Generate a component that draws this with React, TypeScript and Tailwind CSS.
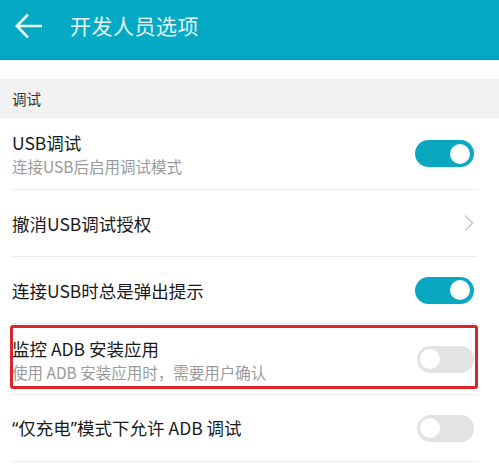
import React from "react";

type RowProps = {
  title: React.ReactNode;
  subtitle?: string;
  control: React.ReactNode;
  height: string;
  highlight?: boolean;
};

function Toggle({ on }: { on: boolean }) {
  return (
    <div
      className={
        on
          ? "flex h-[27px] w-[59px] items-center justify-end rounded-full bg-[#0aa7c1] px-[4px]"
          : "flex h-[27px] w-[57px] items-center justify-start rounded-full bg-[#e3e3e3] px-[3px]"
      }
    >
      <div className="h-[20px] w-[20px] rounded-full bg-white" />
    </div>
  );
}

function Chevron() {
  return (
    <svg width="12" height="18" viewBox="0 0 12 18">
      <path d="M3 1.5 L10.5 9 L3 16.5" fill="none" stroke="#c4c4c4" strokeWidth="1.4" />
    </svg>
  );
}

function Row({ title, subtitle, control, height, highlight }: RowProps) {
  return (
    <div className={`relative ml-[12px] mr-[21px] flex items-center border-b border-[#ececec] ${height}`}>
      <div className="flex flex-1 flex-col">
        <span className="text-[17.5px] leading-[25px] text-[#1a1a1a]">{title}</span>
        {subtitle && (
          <span className="text-[15.5px] leading-[22px] text-[#9a9a9a]">{subtitle}</span>
        )}
      </div>
      <div className="mr-[4px]">{control}</div>
      {highlight && (
        <div className="pointer-events-none absolute left-[-2px] right-[0px] top-[1px] bottom-[5px] rounded-[3px] border-[3px] border-[#d9262b]" />
      )}
    </div>
  );
}

const q = "font-['Noto_Sans']";

export default function App() {
  return (
    <div
      className="h-[472px] w-[499px] overflow-hidden bg-white"
      style={{ fontFamily: '"Noto Sans CJK SC", "Noto Sans", sans-serif' }}
    >
      <div className="flex h-[60px] items-center border-b border-[#1a9aab] bg-[#04a9c4] pb-[8px]">
        <svg width="28" height="26" viewBox="0 0 28 26" className="ml-[15px]">
          <path
            d="M13 1.5 L1.8 13 L13 24.5 M1.8 13 H27"
            fill="none"
            stroke="#e8f7fa"
            strokeWidth="2.6"
          />
        </svg>
        <span className="ml-[27px] text-[21px] tracking-[0.5px] text-[#e6f6f9]">开发人员选项</span>
      </div>
      <div className="h-[19px] bg-[#fdfdfc]" />
      <div className="flex h-[39px] items-center bg-[#f2f2f2] px-[12px]">
        <span className="text-[14.5px] text-[#333]">调试</span>
      </div>
      <Row title="USB调试" subtitle="连接USB后启用调试模式" control={<Toggle on />} height="h-[72px]" />
      <Row title="撤消USB调试授权" control={<Chevron />} height="h-[67px]" />
      <Row title="连接USB时总是弹出提示" control={<Toggle on />} height="h-[67px]" />
      <Row
        title="监控 ADB 安装应用"
        subtitle="使用 ADB 安装应用时，需要用户确认"
        control={<Toggle on={false} />}
        height="h-[71px]"
        highlight
      />
      <Row
        title={
          <>
            <span className={q}>“</span>仅充电<span className={q}>”</span>模式下允许 ADB 调试
          </>
        }
        control={<Toggle on={false} />}
        height="h-[67px]"
      />
    </div>
  );
}
